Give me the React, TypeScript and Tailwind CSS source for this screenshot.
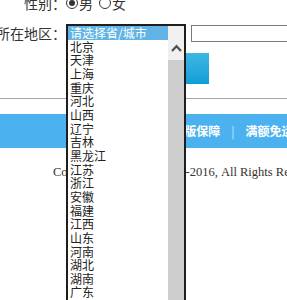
import React from 'react';

const provinces = [
  '北京', '天津', '上海', '重庆', '河北', '山西', '辽宁', '吉林', '黑龙江', '江苏', '浙江',
  '安徽', '福建', '江西', '山东', '河南', '湖北', '湖南', '广东', '广西', '海南',
];

const cjk = { fontFamily: '"Noto Sans CJK SC", "Noto Sans", sans-serif' };

const Radio: React.FC<{ checked?: boolean; className?: string }> = ({ checked, className }) => (
  <span
    className={`flex h-[12px] w-[12px] shrink-0 items-center justify-center rounded-full border border-[#333] bg-white ${className ?? ''}`}
  >
    {checked && <span className="h-[6px] w-[6px] rounded-full bg-[#333]" />}
  </span>
);

const ProvinceList: React.FC = () => (
  <div className="absolute left-0 top-[1px] z-10 flex h-[300px] w-[120px] border-2 border-[#1e1e1e] bg-white" style={cjk}>
    <div className="flex-1 overflow-hidden text-[12px] leading-[13.67px] text-[#222]">
      <div className="h-[13.67px] bg-[#60b3e4] pl-[2px] text-white">请选择省/城市</div>
      {provinces.map(p => (
        <div key={p} className="h-[13.67px] pl-[2px]">
          {p}
        </div>
      ))}
    </div>
    <div className="flex w-[16px] flex-col">
      <div className="flex h-[34px] justify-center bg-[#f0f0f0] pt-[18px]">
        <svg width="11" height="8" viewBox="0 0 11 8">
          <path d="M1 7 L5.5 2.2 L10 7" fill="none" stroke="#505050" strokeWidth="2.2" />
        </svg>
      </div>
      <div className="flex-1 bg-[#cdcdcd]" />
    </div>
  </div>
);

const Label: React.FC<{ text: string }> = ({ text }) => (
  <div className="flex w-[66px] shrink-0 justify-end">
    <span className="shrink-0 whitespace-nowrap">{text}</span>
  </div>
);

export default function App() {
  return (
    <div className="h-[300px] w-[287px] overflow-hidden bg-white text-[14px] text-[#333]" style={cjk}>
      <div className="-mt-[7px]">
        <div className="flex h-[20px] items-center">
          <Label text="性别：" />
          <Radio checked />
          <span className="ml-[1px]">男</span>
          <Radio className="ml-[6px]" />
          <span className="ml-[1px]">女</span>
        </div>

        <div className="mt-[10px] flex h-[21px] items-center">
          <Label text="所在地区：" />
          <div className="relative h-[21px] w-[120px] shrink-0">
            <ProvinceList />
          </div>
          <div className="ml-[5px] h-[17px] w-[200px] shrink-0 border border-[#7a7a7a] bg-white" />
        </div>

        <div className="mt-[9px] pl-[66px]">
          <div className="h-[31px] w-[143px] bg-gradient-to-b from-[#3db6e4] to-[#0a9fd8]" />
        </div>
      </div>

      <div className="mt-[14px] h-px bg-[#a6a6a6]" />

      <div className="mt-[15px] flex h-[34px] items-center whitespace-nowrap bg-[#4cb1ef] pl-[99px] text-[12px] font-bold text-white">
        <span>品质承诺</span>
        <span className="mx-[11px] font-normal text-[#cbe8fb]">|</span>
        <span>正版保障</span>
        <span className="mx-[11px] font-normal text-[#cbe8fb]">|</span>
        <span>满额免运费</span>
        <span className="mx-[11px] font-normal text-[#cbe8fb]">|</span>
        <span>货到付款</span>
      </div>

      <div
        className="mt-[15px] whitespace-nowrap pl-[53px] text-[12.5px] leading-[18px] text-[#333]"
        style={{ fontFamily: '"Liberation Serif", "Noto Sans CJK SC", serif' }}
      >
        Copyright ©<span className="ml-[4px]">商城网</span> 2011-2016, All Rights Reserved
      </div>
    </div>
  );
}
